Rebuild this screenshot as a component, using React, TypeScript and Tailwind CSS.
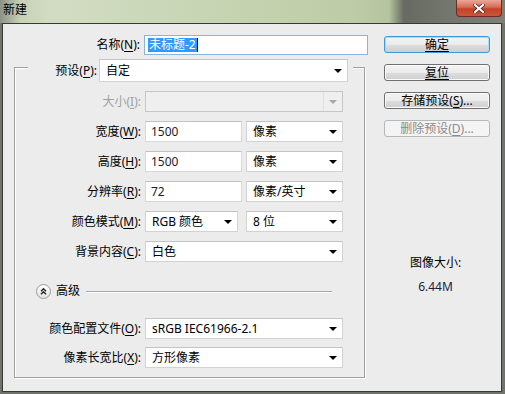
import React from "react";

function Key({ text, k }: { text: string; k: string }) {
  return (
    <span className="whitespace-nowrap">
      {text}(<span className="underline underline-offset-[2px]">{k}</span>):
    </span>
  );
}

function Arrow({ disabled = false }: { disabled?: boolean }) {
  return (
    <svg width="8" height="4" viewBox="0 0 8 4" className="shrink-0">
      <polygon points="0,0 8,0 4,4" fill={disabled ? "#a8a8a8" : "#000"} />
    </svg>
  );
}

function Combo({ value, w, h = "h-[21px]" }: { value: string; w: string; h?: string }) {
  return (
    <div className={`${w} ${h} flex items-center justify-between border border-[#d2d2d2] border-t-[#c4c4c4] bg-white pl-[6px] pr-[5px] text-black`}>
      <span className="whitespace-nowrap">{value}</span>
      <Arrow />
    </div>
  );
}

function Field({ value, w }: { value: string; w: string }) {
  return (
    <div className={`${w} h-[21px] flex items-center border border-[#d8d8d8] border-t-[#c2c2c2] bg-white pl-[5px] text-[#1a1a2e]`}>
      {value}
    </div>
  );
}

function Row({ text, k, children, disabled = false }: { text: string; k: string; children: React.ReactNode; disabled?: boolean }) {
  return (
    <div className="flex h-[21px] items-center">
      <div className={`w-[126px] text-right ${disabled ? "text-[#a0a0a0]" : "text-black"}`}>
        <Key text={text} k={k} />
      </div>
      <div className="ml-[4px] flex gap-[4px]">{children}</div>
    </div>
  );
}

function Button({ label, k, variant = "normal" }: { label: string; k?: string; variant?: "default" | "normal" | "disabled" }) {
  const frame =
    variant === "default"
      ? "border-[#3c9ad8] shadow-[inset_0_0_0_1px_#a6dcf7]"
      : variant === "disabled"
      ? "border-[#b5b8ba]"
      : "border-[#707070] shadow-[inset_0_0_0_1px_#fbfbfb]";
  const bg =
    variant === "disabled"
      ? "bg-[#f4f4f4] text-[#8b8b8b]"
      : "bg-[linear-gradient(to_bottom,#f3f3f3_0%,#ebebeb_50%,#dddddd_51%,#cfcfcf_100%)] text-black";
  return (
    <div className={`flex h-[17px] w-[106px] items-center justify-center rounded-[3px] border leading-none ${frame} ${bg}`}>
      {k ? (
        <span>
          {label}(<span className="underline underline-offset-[2px]">{k}</span>)...
        </span>
      ) : (
        <span className="underline underline-offset-[2px]">{label}</span>
      )}
    </div>
  );
}

export default function App() {
  return (
    <div className="flex h-[394px] w-[505px] flex-col overflow-hidden bg-[#6f7369] font-['Noto_Sans','Noto_Sans_CJK_SC',sans-serif] text-[12px] leading-[14px]">
      {/* title bar */}
      <div className="flex h-[23px] shrink-0 justify-between bg-[linear-gradient(to_right,#8d9284_0%,#c6d1b5_4%,#d2dcc3_10%,#c8d5b4_40%,#bdcca6_70%,#b6c59f_77%,#666a60_80%,#75786e_90%,#7e8077_100%)]">
        <span className="pl-[3px] pt-[3px] text-[12px] text-black">新建</span>
        <div className="mr-[3px] flex h-[17px] w-[46px] items-center justify-center rounded-b-[4px] border border-t-0 border-[#6e2b20] bg-[linear-gradient(to_bottom,#e9a898_0%,#d86a53_45%,#c5432a_55%,#c9553a_100%)]">
          <svg width="12" height="9" viewBox="0 0 12 9">
            <path d="M2 1 L10 8 M10 1 L2 8" stroke="#4a1a12" strokeWidth="3.6" strokeLinecap="square" />
            <path d="M2 1 L10 8 M10 1 L2 8" stroke="#fff" strokeWidth="2.2" strokeLinecap="square" />
          </svg>
        </div>
      </div>

      {/* client area */}
      <div className="ml-[2px] mr-[3px] flex h-[369px] border border-[#363a33] bg-[#ececec] text-black">
        {/* left */}
        <div className="flex w-[367px] flex-col">
          <div className="mt-[11px] flex h-[20px] items-center">
            <div className="w-[137px] text-right">
              <Key text="名称" k="N" />
            </div>
            <div className="ml-[4px] flex h-[20px] w-[224px] items-center border border-[#8db2dc] bg-white pl-[3px]">
              <span className="bg-[#3399ff] px-[1px] text-white">未标题-2</span>
              <span className="h-[14px] w-[1px] bg-black" />
            </div>
          </div>

          {/* group box */}
          <div className="ml-[11px] mt-[12px] flex h-[311px] w-[351px] flex-col border border-[#a0a0a0] shadow-[inset_1px_1px_0_#fff,1px_1px_0_#fff]">
            <div className="-mt-[9px] ml-[13px] flex h-[23px] w-[325px] items-center justify-end gap-[2px] bg-[#ececec] pr-[5px]">
              <Key text="预设" k="P" />
              <Combo value="自定" w="w-[249px]" h="h-[23px]" />
            </div>

            <div className="mt-[9px] flex flex-col gap-[9px]">
              <Row text="大小" k="I" disabled>
                <div className="flex h-[21px] w-[198px] items-center border border-[#c6c6c6] bg-[#efefef]">
                  <div className="h-full flex-1" />
                  <div className="flex h-full w-[19px] items-center justify-center border-l border-[#e0e0e0]">
                    <Arrow disabled />
                  </div>
                </div>
              </Row>
              <Row text="宽度" k="W">
                <Field value="1500" w="w-[97px]" />
                <Combo value="像素" w="w-[97px]" />
              </Row>
              <Row text="高度" k="H">
                <Field value="1500" w="w-[97px]" />
                <Combo value="像素" w="w-[97px]" />
              </Row>
              <Row text="分辨率" k="R">
                <Field value="72" w="w-[97px]" />
                <Combo value="像素/英寸" w="w-[97px]" />
              </Row>
              <Row text="颜色模式" k="M">
                <Combo value="RGB 颜色" w="w-[93px]" />
                <div className="ml-[4px]">
                  <Combo value="8 位" w="w-[97px]" />
                </div>
              </Row>
              <Row text="背景内容" k="C">
                <Combo value="白色" w="w-[198px]" />
              </Row>
            </div>

            {/* advanced */}
            <div className="ml-[21px] mt-[22px] flex h-[14px] items-center">
              <div className="flex h-[15px] w-[15px] items-center justify-center rounded-full border border-[#9a9a9a] bg-[linear-gradient(to_bottom,#ffffff,#e2e2e2)]">
                <svg width="7" height="7" viewBox="0 0 7 7">
                  <path d="M1 3.2 L3.5 0.8 L6 3.2 M1 6.2 L3.5 3.8 L6 6.2" stroke="#222" strokeWidth="1.4" fill="none" />
                </svg>
              </div>
              <span className="ml-[5px]">高级</span>
              <div className="ml-[6px] h-[1px] w-[246px] bg-[#a8a8a8] shadow-[0_1px_0_#fff]" />
            </div>

            <div className="mt-[20px] flex flex-col gap-[8px]">
              <Row text="颜色配置文件" k="O">
                <Combo value="sRGB IEC61966-2.1" w="w-[198px]" />
              </Row>
              <Row text="像素长宽比" k="X">
                <Combo value="方形像素" w="w-[198px]" />
              </Row>
            </div>
          </div>
        </div>

        {/* right */}
        <div className="flex flex-1 flex-col">
          <div className="ml-[14px] mt-[12px] flex flex-col gap-[11px]">
            <Button label="确定" variant="default" />
            <Button label="复位" />
            <Button label="存储预设" k="S" />
            <Button label="删除预设" k="D" variant="disabled" />
          </div>
          <div className="mt-[119px] text-center">图像大小:</div>
          <div className="mt-[10px] text-center text-[#1e1e3c]">6.44M</div>
        </div>
      </div>
    </div>
  );
}
